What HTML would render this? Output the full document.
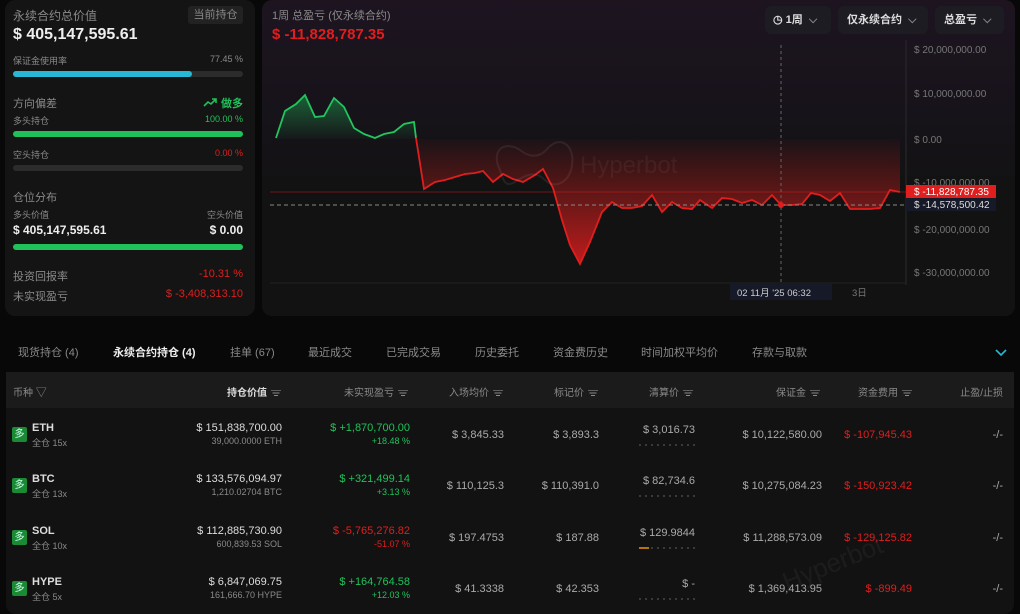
<!DOCTYPE html><html><head><meta charset="utf-8"><style>
*{margin:0;padding:0;box-sizing:border-box}
body{width:1020px;height:614px;background:#080808;font-family:"Liberation Sans","Noto Sans CJK SC",sans-serif;color:#ddd;position:relative;overflow:hidden}
.a{position:absolute;white-space:nowrap}
.g{color:#8a8a8a}.gr{color:#1fc25a}.rd{color:#e01e1e}
.bar{position:absolute;height:6px;border-radius:3px;background:#2c2c2c}
.card{position:absolute;background:#141414;border-radius:10px}
.th{font-size:10px;color:#8a8a8a}
.sort{display:inline-block;width:10px;height:6px;margin-left:4px;vertical-align:middle;background:linear-gradient(#888 0 1px,transparent 1px 2.5px,#888 2.5px 3.5px,transparent 3.5px 5px,#888 5px 6px);clip-path:polygon(0 0,100% 0,100% 20%,85% 20%,85% 60%,70% 60%,70% 100%,30% 100%,30% 60%,15% 60%,15% 20%,0 20%)}
.ic{position:absolute;left:12px;width:15px;height:15px;background:#1b8a34;border-radius:2px;color:#cfe;font-size:10px;text-align:center;line-height:15px}
.v{font-size:11px;color:#ddd}.s{font-size:9px;color:#8a8a8a}
.dots{position:absolute;height:2px;width:56px;background:repeating-linear-gradient(90deg,#3a3a3a 0 2px,transparent 2px 6px)}
</style></head><body>
<div class="card" style="left:5px;top:0;width:250px;height:316px"></div>
<div class="a g" style="left:13px;top:7px;font-size:12px">永续合约总价值</div>
<div class="a" style="left:188px;top:6px;width:55px;height:18px;background:#222;border-radius:3px;font-size:11px;color:#888;text-align:center;line-height:18px">当前持仓</div>
<div class="a" style="left:13px;top:26px;font-size:16px;font-weight:bold;color:#eee">$ 405,147,595.61</div>
<div class="a g" style="left:13px;top:54px;font-size:9px">保证金使用率</div>
<div class="a g" style="right:777px;top:54px;font-size:9px">77.45 %</div>
<div class="bar" style="left:13px;top:71px;width:230px"></div><div class="bar" style="left:13px;top:71px;width:179px;background:#26b8d4"></div>
<div class="a g" style="left:13px;top:95px;font-size:11px">方向偏差</div>
<div class="a gr" style="right:777px;top:95px;font-size:11px;font-weight:bold"><svg width="14" height="9" viewBox="0 0 14 9" style="margin-right:4px"><path d="M1 8 L5 4 L8 6 L13 1 M9 1 H13 V5" fill="none" stroke="#1fc25a" stroke-width="1.6"/></svg>做多</div>
<div class="a g" style="left:13px;top:114px;font-size:9px">多头持仓</div>
<div class="a gr" style="right:777px;top:114px;font-size:9px">100.00 %</div>
<div class="bar" style="left:13px;top:131px;width:230px;background:#1fc25a"></div>
<div class="a g" style="left:13px;top:148px;font-size:9px">空头持仓</div>
<div class="a rd" style="right:777px;top:148px;font-size:9px">0.00 %</div>
<div class="bar" style="left:13px;top:165px;width:230px"></div>
<div class="a g" style="left:13px;top:189px;font-size:11px">仓位分布</div>
<div class="a g" style="left:13px;top:208px;font-size:9px">多头价值</div>
<div class="a g" style="right:777px;top:208px;font-size:9px">空头价值</div>
<div class="a" style="left:13px;top:223px;font-size:12px;font-weight:bold;color:#eee">$ 405,147,595.61</div>
<div class="a" style="right:777px;top:223px;font-size:12px;font-weight:bold;color:#eee">$ 0.00</div>
<div class="bar" style="left:13px;top:244px;width:230px;background:#1fc25a"></div>
<div class="a g" style="left:13px;top:268px;font-size:11px">投资回报率</div>
<div class="a rd" style="right:777px;top:268px;font-size:11px">-10.31 %</div>
<div class="a g" style="left:13px;top:288px;font-size:11px">未实现盈亏</div>
<div class="a rd" style="right:777px;top:288px;font-size:11px">$ -3,408,313.10</div>

<div class="card" style="left:262px;top:0;width:753px;height:316px;background:linear-gradient(180deg,#1d1420 0%,#17131a 35%,#121212 60%)"></div>
<div class="a g" style="left:272px;top:7px;font-size:11px">1周 总盈亏 (仅永续合约)</div>
<div class="a rd" style="left:272px;top:26px;font-size:15px;font-weight:bold">$ -11,828,787.35</div>
<div class="a" style="left:765px;top:6px;width:66px;height:28px;background:#1c1c22;border-radius:6px;font-size:11px;font-weight:bold;color:#ddd;line-height:28px;padding-left:8px">◷ 1周 &nbsp;<span style="color:#888">⌵</span></div>
<div class="a" style="left:838px;top:6px;width:90px;height:28px;background:#1c1c22;border-radius:6px;font-size:11px;font-weight:bold;color:#ddd;line-height:28px;padding-left:9px">仅永续合约 &nbsp;<span style="color:#888">⌵</span></div>
<div class="a" style="left:935px;top:6px;width:69px;height:28px;background:#1c1c22;border-radius:6px;font-size:11px;font-weight:bold;color:#ddd;line-height:28px;padding-left:9px">总盈亏 &nbsp;<span style="color:#888">⌵</span></div>
<svg class="a" style="left:0;top:0" width="1020" height="320">
<defs>
<linearGradient id="rg" x1="0" y1="139" x2="0" y2="265" gradientUnits="userSpaceOnUse"><stop offset="0" stop-color="#e01e1e" stop-opacity="0.03"/><stop offset="0.4" stop-color="#e01e1e" stop-opacity="0.35"/><stop offset="1" stop-color="#e01e1e" stop-opacity="0.85"/></linearGradient>
<linearGradient id="gg" x1="0" y1="95" x2="0" y2="139" gradientUnits="userSpaceOnUse"><stop offset="0" stop-color="#1fc25a" stop-opacity="0.45"/><stop offset="1" stop-color="#1fc25a" stop-opacity="0.03"/></linearGradient>
</defs>
<line x1="906" y1="40" x2="906" y2="285" stroke="#2a2a2a"/>
<line x1="270" y1="283" x2="906" y2="283" stroke="#222"/>
<polygon fill="url(#gg)" points="276,139 276,138 285,111 296,104 305,95 315,117 324,116 334,98 344,107 354,128 364,134 375,138 384,134 394,132 404,124 414,122 416,139"/>
<polygon fill="url(#rg)" points="416,139 424,189 435,182 445,180 465,174 475,173 483,171 493,182 503,174 513,179 523,182 535,175 543,169 553,188 562,220 570,245 580,264 590,242 602,212 612,202 622,208 632,208 642,206 652,195 662,212 672,202 682,208 692,209 700,200 712,208 722,198 732,199 742,203 752,200 762,205 772,195 781,205 792,205 802,204 811,193 820,195 830,201 840,193 850,209 870,209 880,208 890,190 900,192 900,139"/>
<polyline fill="none" stroke="#22c55e" stroke-width="1.8" points="276,138 285,111 296,104 305,95 315,117 324,116 334,98 344,107 354,128 364,134 375,138 384,134 394,132 404,124 414,122 416,138"/>
<polyline fill="none" stroke="#e01e1e" stroke-width="1.8" points="416,138 424,189 435,182 445,180 465,174 475,173 483,171 493,182 503,174 513,179 523,182 535,175 543,169 553,188 562,220 570,245 580,264 590,242 602,212 612,202 622,208 632,208 642,206 652,195 662,212 672,202 682,208 692,209 700,200 712,208 722,198 732,199 742,203 752,200 762,205 772,195 781,205 792,205 802,204 811,193 820,195 830,201 840,193 850,209 870,209 880,208 890,190 900,192"/>
<line x1="270" y1="192" x2="906" y2="192" stroke="#e01e1e" stroke-width="0.7" stroke-opacity="0.6"/>
<line x1="270" y1="205" x2="906" y2="205" stroke="#888" stroke-dasharray="4 3"/>
<line x1="781" y1="45" x2="781" y2="285" stroke="#666" stroke-dasharray="3 3"/>
<circle cx="781" cy="205" r="3" fill="#e01e1e"/>
<g font-family="Liberation Sans" font-size="10" fill="#777"><text x="914" y="53">$ 20,000,000.00</text><text x="914" y="97">$ 10,000,000.00</text><text x="914" y="143">$ 0.00</text><text x="914" y="186">$ -10,000,000.00</text><text x="914" y="233">$ -20,000,000.00</text><text x="914" y="276">$ -30,000,000.00</text></g>
<g opacity="0.07" stroke="#fff" stroke-width="2" fill="none"><path d="M500 170 C490 150 505 140 520 150 C530 158 540 158 548 148 C560 135 575 145 572 165 C570 182 555 190 545 180 C535 170 525 175 515 182 C505 188 503 180 500 170Z"/></g>
<text x="580" y="173" font-family="Liberation Sans" font-size="24" fill="#fff" fill-opacity="0.05">Hyperbot</text>
<rect x="906" y="185" width="90" height="13" fill="#e01e1e"/><text x="914" y="195" font-family="Liberation Sans" font-size="10" fill="#fff">$ -11,828,787.35</text>
<rect x="906" y="198" width="90" height="13" fill="#161a28"/><text x="914" y="208" font-family="Liberation Sans" font-size="10" fill="#ddd">$ -14,578,500.42</text>
<rect x="730" y="284" width="102" height="16" fill="#161a28"/><text x="737" y="296" font-family="Liberation Sans,Noto Sans CJK SC" font-size="9.5" fill="#ccc">02 11月 '25  06:32</text>
<text x="852" y="296" font-family="Liberation Sans,Noto Sans CJK SC" font-size="9.5" fill="#777">3日</text>
</svg>

<div class="a" style="left:6px;top:330px;width:1008px;height:284px;background:#121212;border-radius:0 0 10px 10px"></div>
<div class="a" style="left:6px;top:330px;width:1014px;height:42px;background:#080808"></div>
<div class="a" style="left:0;top:344px;font-size:11px;width:1020px">
<span class="a g" style="left:18px">现货持仓 (4)</span><span class="a" style="left:113px;color:#eee;font-weight:bold">永续合约持仓 (4)</span><span class="a g" style="left:230px">挂单 (67)</span><span class="a g" style="left:308px">最近成交</span><span class="a g" style="left:386px">已完成交易</span><span class="a g" style="left:475px">历史委托</span><span class="a g" style="left:553px">资金费历史</span><span class="a g" style="left:641px">时间加权平均价</span><span class="a g" style="left:752px">存款与取款</span></div>
<svg class="a" style="left:995px;top:349px" width="12" height="8"><path d="M1 1 L6 6 L11 1" fill="none" stroke="#26b8d4" stroke-width="1.6"/></svg>
<div class="a" style="left:6px;top:372px;width:1008px;height:36px;background:#1b1b1b"></div>
<div class="th a" style="left:13px;top:384px">币种 <span style="font-size:11px">▽</span></div>
<div class="th a" style="right:739px;top:384px;color:#ddd;font-weight:bold">持仓价值<span class="sort"></span></div>
<div class="th a" style="right:612px;top:384px">未实现盈亏<span class="sort"></span></div>
<div class="th a" style="right:517px;top:384px">入场均价<span class="sort"></span></div>
<div class="th a" style="right:422px;top:384px">标记价<span class="sort"></span></div>
<div class="th a" style="right:327px;top:384px">清算价<span class="sort"></span></div>
<div class="th a" style="right:200px;top:384px">保证金<span class="sort"></span></div>
<div class="th a" style="right:108px;top:384px">资金费用<span class="sort"></span></div>
<div class="th a" style="right:17px;top:384px">止盈/止损</div>

<div class="a" style="left:0;top:422px;width:1020px;height:30px">
<div class="ic" style="top:5px">多</div><div class="a v" style="left:32px;top:0;font-weight:bold">ETH</div><div class="a s" style="left:32px;top:14px">全仓 15x</div>
<div class="a v" style="right:738px;top:0">$ 151,838,700.00</div><div class="a s" style="right:738px;top:14px">39,000.0000 ETH</div>
<div class="a v" style="right:610px;top:0;color:#1fc25a">$ +1,870,700.00</div><div class="a s" style="right:610px;top:14px;color:#1fc25a">+18.48 %</div>
<div class="a v" style="right:516px;top:7px;color:#aaa">$ 3,845.33</div>
<div class="a v" style="right:421px;top:7px;color:#aaa">$ 3,893.3</div>
<div class="a v" style="right:325px;top:2px;color:#aaa">$ 3,016.73</div><div class="dots" style="left:639px;top:22px"></div>
<div class="a v" style="right:198px;top:7px;color:#aaa">$ 10,122,580.00</div>
<div class="a v" style="right:108px;top:7px;color:#e01e1e">$ -107,945.43</div>
<div class="a v" style="right:17px;top:7px;color:#aaa">-/-</div></div>

<div class="a" style="left:0;top:473px;width:1020px;height:30px">
<div class="ic" style="top:5px">多</div><div class="a v" style="left:32px;top:0;font-weight:bold">BTC</div><div class="a s" style="left:32px;top:14px">全仓 13x</div>
<div class="a v" style="right:738px;top:0">$ 133,576,094.97</div><div class="a s" style="right:738px;top:14px">1,210.02704 BTC</div>
<div class="a v" style="right:610px;top:0;color:#1fc25a">$ +321,499.14</div><div class="a s" style="right:610px;top:14px;color:#1fc25a">+3.13 %</div>
<div class="a v" style="right:516px;top:7px;color:#aaa">$ 110,125.3</div>
<div class="a v" style="right:421px;top:7px;color:#aaa">$ 110,391.0</div>
<div class="a v" style="right:325px;top:2px;color:#aaa">$ 82,734.6</div><div class="dots" style="left:639px;top:22px"></div>
<div class="a v" style="right:198px;top:7px;color:#aaa">$ 10,275,084.23</div>
<div class="a v" style="right:108px;top:7px;color:#e01e1e">$ -150,923.42</div>
<div class="a v" style="right:17px;top:7px;color:#aaa">-/-</div></div>

<div class="a" style="left:0;top:525px;width:1020px;height:30px">
<div class="ic" style="top:5px">多</div><div class="a v" style="left:32px;top:0;font-weight:bold">SOL</div><div class="a s" style="left:32px;top:14px">全仓 10x</div>
<div class="a v" style="right:738px;top:0">$ 112,885,730.90</div><div class="a s" style="right:738px;top:14px">600,839.53 SOL</div>
<div class="a v" style="right:610px;top:0;color:#e01e1e">$ -5,765,276.82</div><div class="a s" style="right:610px;top:14px;color:#e01e1e">-51.07 %</div>
<div class="a v" style="right:516px;top:7px;color:#aaa">$ 197.4753</div>
<div class="a v" style="right:421px;top:7px;color:#aaa">$ 187.88</div>
<div class="a v" style="right:325px;top:2px;color:#aaa">$ 129.9844</div><div class="dots" style="left:639px;top:22px;background:linear-gradient(90deg,#b8730f 0 10px,transparent 10px),repeating-linear-gradient(90deg,#3a3a3a 0 2px,transparent 2px 6px)"></div>
<div class="a v" style="right:198px;top:7px;color:#aaa">$ 11,288,573.09</div>
<div class="a v" style="right:108px;top:7px;color:#e01e1e">$ -129,125.82</div>
<div class="a v" style="right:17px;top:7px;color:#aaa">-/-</div></div>

<div class="a" style="left:0;top:576px;width:1020px;height:30px">
<div class="ic" style="top:5px">多</div><div class="a v" style="left:32px;top:0;font-weight:bold">HYPE</div><div class="a s" style="left:32px;top:14px">全仓 5x</div>
<div class="a v" style="right:738px;top:0">$ 6,847,069.75</div><div class="a s" style="right:738px;top:14px">161,666.70 HYPE</div>
<div class="a v" style="right:610px;top:0;color:#1fc25a">$ +164,764.58</div><div class="a s" style="right:610px;top:14px;color:#1fc25a">+12.03 %</div>
<div class="a v" style="right:516px;top:7px;color:#aaa">$ 41.3338</div>
<div class="a v" style="right:421px;top:7px;color:#aaa">$ 42.353</div>
<div class="a v" style="right:325px;top:2px;color:#aaa">$ -</div><div class="dots" style="left:639px;top:22px"></div>
<div class="a v" style="right:198px;top:7px;color:#aaa">$ 1,369,413.95</div>
<div class="a v" style="right:108px;top:7px;color:#e01e1e">$ -899.49</div>
<div class="a v" style="right:17px;top:7px;color:#aaa">-/-</div></div>
<div class="a" style="left:780px;top:548px;font-size:26px;color:#fff;opacity:0.04;transform:rotate(-22deg)">Hyperbot</div>
</body></html>
